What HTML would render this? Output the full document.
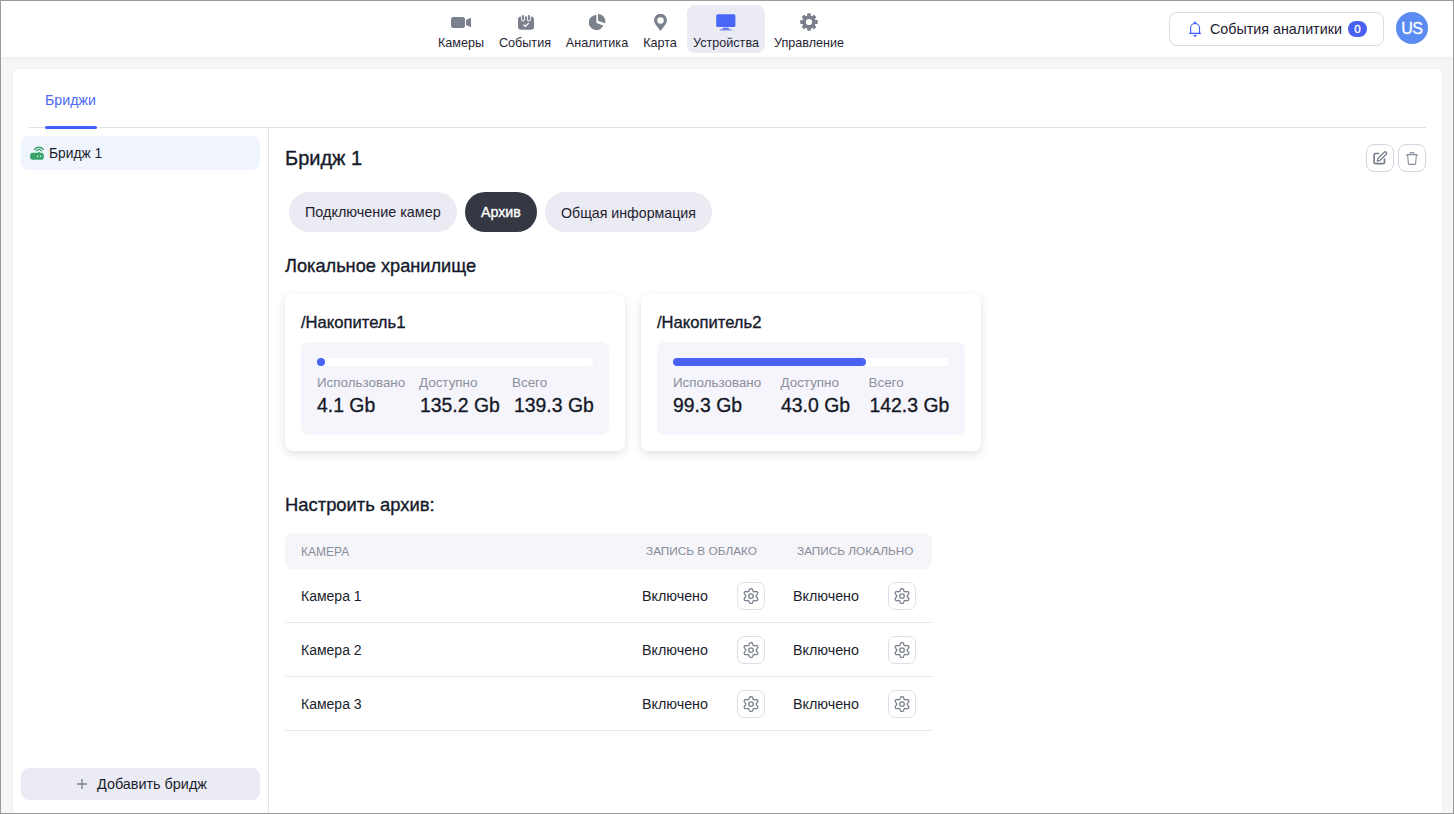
<!DOCTYPE html>
<html><head><meta charset="utf-8">
<style>
*{box-sizing:border-box;margin:0;padding:0}
html,body{width:1454px;height:814px;overflow:hidden}
body{font-family:"Liberation Sans",sans-serif;background:#f6f6f8;position:relative;color:#1a1e2c}
.frame{position:absolute;left:0;top:0;width:1454px;height:814px;border:1px solid #9b9b9b;pointer-events:none;z-index:50}
.t{position:absolute;line-height:1;white-space:nowrap}
.b{position:absolute}
.m{-webkit-text-stroke:0.35px currentColor}
header{position:absolute;left:0;top:0;width:1454px;height:57px;background:#fff;box-shadow:0 1px 6px rgba(0,0,0,0.035)}
.nav{position:absolute;top:5px;height:48px;border-radius:8px}
.nav.active{background:#ebebf4}
.nav svg{position:absolute}
.nl{position:absolute;text-align:center;top:36.8px;font-size:12.6px;line-height:1;color:#1f2433;white-space:nowrap}
.evbtn{position:absolute;left:1169px;top:12px;width:215px;height:34px;border:1px solid #d6dbe6;border-radius:8px;background:#fff}
.badge{position:absolute;left:1348px;top:21px;width:19px;height:16px;border-radius:8px;background:#4a60f0;color:#fff;font-size:11.5px;text-align:center;line-height:16.5px;-webkit-text-stroke:0.35px #fff}
.avatar{position:absolute;left:1396px;top:12px;width:32px;height:32px;border-radius:50%;background:#5a8cf4;color:#fff;font-size:16px;text-align:center;line-height:33px;-webkit-text-stroke:0.3px #fff;letter-spacing:-0.6px;text-indent:-0.6px}
.card{position:absolute;left:13px;top:69px;width:1429px;height:744px;background:#fff;border-radius:5px;box-shadow:0 0 5px rgba(0,0,0,0.045)}
.pill{position:absolute;top:192px;height:40px;border-radius:20px;background:#ebebf3}
.scard{position:absolute;top:294px;width:340px;height:157px;background:#fff;border-radius:8px;box-shadow:0 3px 10px rgba(0,0,0,0.12)}
.sbox{position:absolute;left:16px;top:48px;width:308px;height:93px;background:#f5f5fb;border-radius:8px}
.track{position:absolute;left:16px;top:16px;width:276px;height:8px;border-radius:4px;background:#fff}
.fill{position:absolute;left:0;top:0;height:8px;border-radius:4px;background:#4762f5}
.lbl{position:absolute;line-height:1;white-space:nowrap;font-size:13.4px;color:#8b909d;top:33.7px}
.val{position:absolute;line-height:1;white-space:nowrap;font-size:19.4px;color:#141826;top:53.6px;-webkit-text-stroke:0.3px currentColor}
.gear{position:absolute;width:28px;height:28px;border:1px solid #dce0e9;border-radius:7px;background:#fff}
.gear svg{position:absolute;left:5px;top:5px}
.row{position:absolute;left:285px;width:647px;height:1px;background:#e6e8ef}
.ibtn{position:absolute;top:144px;width:28px;height:28px;border:1px solid #d3d9e4;border-radius:8px;background:#fff}
</style></head>
<body>
<div class="frame"></div>
<svg width="0" height="0" style="position:absolute"><defs><symbol id="g6" viewBox="0 0 16 16"><path d="M8.00 0.55 L8.40 0.56 L8.78 0.67 L9.12 1.01 L9.42 1.44 L9.66 1.92 L9.85 2.40 L10.01 2.85 L10.17 3.23 L10.38 3.42 L10.62 3.55 L10.86 3.70 L11.13 3.79 L11.54 3.73 L12.01 3.65 L12.53 3.57 L13.06 3.54 L13.58 3.58 L14.04 3.71 L14.33 3.99 L14.54 4.32 L14.73 4.67 L14.82 5.06 L14.70 5.53 L14.48 6.00 L14.18 6.44 L13.86 6.85 L13.55 7.22 L13.30 7.54 L13.24 7.83 L13.25 8.10 L13.24 8.37 L13.30 8.66 L13.55 8.98 L13.86 9.35 L14.18 9.76 L14.48 10.20 L14.70 10.67 L14.82 11.14 L14.73 11.53 L14.54 11.87 L14.33 12.21 L14.04 12.49 L13.58 12.62 L13.06 12.66 L12.53 12.63 L12.01 12.55 L11.54 12.47 L11.13 12.41 L10.86 12.50 L10.62 12.65 L10.38 12.78 L10.17 12.97 L10.01 13.35 L9.85 13.80 L9.66 14.28 L9.42 14.76 L9.12 15.19 L8.78 15.53 L8.40 15.64 L8.00 15.65 L7.60 15.64 L7.22 15.53 L6.88 15.19 L6.58 14.76 L6.34 14.28 L6.15 13.80 L5.99 13.35 L5.83 12.97 L5.62 12.78 L5.38 12.65 L5.14 12.50 L4.87 12.41 L4.46 12.47 L3.99 12.55 L3.47 12.63 L2.94 12.66 L2.42 12.62 L1.96 12.49 L1.67 12.21 L1.46 11.88 L1.27 11.53 L1.18 11.14 L1.30 10.67 L1.52 10.20 L1.82 9.76 L2.14 9.35 L2.45 8.98 L2.70 8.66 L2.76 8.37 L2.75 8.10 L2.76 7.83 L2.70 7.54 L2.45 7.22 L2.14 6.85 L1.82 6.44 L1.52 6.00 L1.30 5.53 L1.18 5.06 L1.27 4.67 L1.46 4.32 L1.67 3.99 L1.96 3.71 L2.42 3.58 L2.94 3.54 L3.47 3.57 L3.99 3.65 L4.46 3.73 L4.87 3.79 L5.14 3.70 L5.38 3.55 L5.62 3.42 L5.83 3.23 L5.99 2.85 L6.15 2.40 L6.34 1.92 L6.58 1.44 L6.88 1.01 L7.22 0.67 L7.60 0.56Z" fill="none" stroke="#7b818d" stroke-width="1.35" stroke-linejoin="round"/><circle cx="8" cy="8.1" r="2.3" fill="none" stroke="#7b818d" stroke-width="1.35"/></symbol></defs></svg>
<header>
  <div class="nav active" style="left:687px;width:78px"></div>
  <svg class="b" style="left:451px;top:17px" width="20" height="11" viewBox="0 0 20 11"><rect x="0" y="0" width="14" height="11" rx="2.5" fill="#7a808c"/><path d="M15 3 L20 0.8 V10.2 L15 8Z" fill="#7a808c"/></svg>
  <svg class="b" style="left:518px;top:15px" width="16" height="15" viewBox="0 0 16 15"><rect x="0" y="1.4" width="16" height="13.3" rx="3" fill="#7a808c"/><rect x="3.2" y="-1" width="3.8" height="7.4" rx="1.9" fill="#fff"/><rect x="9" y="-1" width="3.8" height="7.4" rx="1.9" fill="#fff"/><rect x="4.1" y="0" width="2" height="5.4" rx="1" fill="#7a808c"/><rect x="9.9" y="0" width="2" height="5.4" rx="1" fill="#7a808c"/><path d="M5.5 9.6 L7.3 11.3 L10.7 8.1" stroke="#fff" stroke-width="1.25" fill="none"/></svg>
  <svg class="b" style="left:589px;top:14px" width="17" height="16" viewBox="0 0 17 16"><path d="M7.4 0.9 A7.6 7.6 0 1 0 14.3 11.6 L7.4 8.9 Z" fill="#7a808c"/><path d="M9 0 V6.8 L16 9.2 A7.2 7.2 0 0 0 9 0 Z" fill="#7a808c"/></svg>
  <svg class="b" style="left:654px;top:14px" width="13" height="17" viewBox="0 0 12.4 16.3"><path fill-rule="evenodd" fill="#7a808c" d="M6.2 16.3 L1.3 9.8 A6.2 6.2 0 1 1 11.1 9.8 Z M6.2 3.1 A3.1 3.1 0 1 0 6.2 9.3 A3.1 3.1 0 1 0 6.2 3.1Z"/></svg>
  <svg class="b" style="left:716px;top:14px" width="20" height="17" viewBox="0 0 20 17"><rect x="0.2" y="0.2" width="19.2" height="12.8" rx="1.6" fill="#4a66f7"/><rect x="6.8" y="13.8" width="6" height="1.6" fill="#4a66f7"/><rect x="3.8" y="15.2" width="12" height="1.4" rx="0.5" fill="#4a66f7" opacity="0.75"/></svg>
  <svg class="b" style="left:800px;top:12.5px" width="18" height="18" viewBox="0 0 18 18"><g fill="#7a808c"><rect x="7.1" y="0.2" width="3.8" height="4" rx="1" transform="rotate(0 9 9)"/><rect x="7.1" y="0.2" width="3.8" height="4" rx="1" transform="rotate(45 9 9)"/><rect x="7.1" y="0.2" width="3.8" height="4" rx="1" transform="rotate(90 9 9)"/><rect x="7.1" y="0.2" width="3.8" height="4" rx="1" transform="rotate(135 9 9)"/><rect x="7.1" y="0.2" width="3.8" height="4" rx="1" transform="rotate(180 9 9)"/><rect x="7.1" y="0.2" width="3.8" height="4" rx="1" transform="rotate(225 9 9)"/><rect x="7.1" y="0.2" width="3.8" height="4" rx="1" transform="rotate(270 9 9)"/><rect x="7.1" y="0.2" width="3.8" height="4" rx="1" transform="rotate(315 9 9)"/><circle cx="9" cy="9" r="6.6"/></g><circle cx="9" cy="9" r="3.1" fill="#fff"/></svg>
  <span class="nl" style="left:436px;width:50px">Камеры</span>
  <span class="nl" style="left:497px;width:56px">События</span>
  <span class="nl" style="left:563px;width:68px">Аналитика</span>
  <span class="nl" style="left:640px;width:40px">Карта</span>
  <span class="nl" style="left:687px;width:78px">Устройства</span>
  <span class="nl" style="left:772px;width:74px">Управление</span>
  <div class="evbtn"></div>
  <svg class="b" style="left:1189px;top:21px" width="12" height="16" viewBox="0 0 12 16"><path d="M1.6 12.4 V6.95 A4.45 4.45 0 0 1 10.5 6.95 V12.4 M0.6 12.4 H11.5" stroke="#3f5ef7" stroke-width="1.15" fill="none" stroke-linecap="round"/><path d="M4.9 2.7 L6 0.3 L7.1 2.7Z" fill="#3f5ef7" stroke="#3f5ef7" stroke-width="0.6" stroke-linejoin="round"/><path d="M4.5 14.2 H7.5 L6 15.9Z" fill="#3f5ef7" stroke="#3f5ef7" stroke-width="0.6" stroke-linejoin="round"/></svg>
  <span class="t" style="left:1210px;top:21.8px;font-size:14.3px;color:#1c2030">События аналитики</span>
  <div class="badge">0</div>
  <div class="avatar">US</div>
</header>

<div class="card"></div>
<!-- tabs -->
<span class="t" style="left:45px;top:92.5px;font-size:14.2px;color:#4c69f6">Бриджи</span>
<div class="b" style="left:29px;top:127px;width:1397px;height:1px;background:#dde2ec"></div>
<div class="b" style="left:45px;top:126px;width:52px;height:3px;border-radius:2px;background:#4361f5"></div>
<!-- sidebar -->
<div class="b" style="left:268px;top:128px;width:1px;height:686px;background:#e4e6ec"></div>
<div class="b" style="left:21px;top:136px;width:239px;height:34px;border-radius:8px;background:#f0f4fd"></div>
<svg class="b" style="left:30px;top:146px" width="14" height="14" viewBox="0 0 14 14"><path d="M4.4 3.5 Q9 -0.9 13.6 3.5" stroke="#36a269" stroke-width="1.35" fill="none" stroke-linecap="round"/><path d="M6.4 4.9 Q9 2.4 11.5 4.9" stroke="#36a269" stroke-width="1.3" fill="none" stroke-linecap="round"/><rect x="0.2" y="6.8" width="13.6" height="7" rx="2.4" fill="#36a269"/><rect x="8.2" y="6" width="1.6" height="1.5" rx="0.5" fill="#36a269"/><circle cx="7.6" cy="10.3" r="0.75" fill="#fff"/><circle cx="10.5" cy="10.3" r="0.75" fill="#fff"/></svg>
<span class="t" style="left:49px;top:146.5px;font-size:13.8px;color:#1a1e2c">Бридж 1</span>

<div class="b" style="left:21px;top:768px;width:239px;height:32px;border-radius:8px;background:#eaebf4"></div>
<svg class="b" style="left:77px;top:779px" width="10" height="10" viewBox="0 0 10 10"><path d="M5 0 V10 M0 5 H10" stroke="#7c818d" stroke-width="1.3"/></svg>
<span class="t" style="left:97px;top:777.3px;font-size:14.4px;color:#1a1e2c">Добавить бридж</span>

<!-- main -->
<span class="t m" style="left:285px;top:148.4px;font-size:20px;color:#151a2b">Бридж 1</span>
<div class="ibtn" style="left:1366px"><svg class="b" style="left:4px;top:4px" width="18" height="18" viewBox="0 0 18 18"><path d="M8.3 4.5 H4.4 A1.3 1.3 0 0 0 3.1 5.8 V13.4 A1.3 1.3 0 0 0 4.4 14.7 H12.2 A1.3 1.3 0 0 0 13.5 13.4 V9.6" stroke="#79808c" stroke-width="1.7" fill="none"/><path d="M6.20 12.10 L9.08 11.34 L15.31 5.34 A1.45 1.45 0 0 0 13.29 3.26 L7.07 9.25Z" stroke="#79808c" stroke-width="1.3" fill="none" stroke-linejoin="round"/></svg></div>
<div class="ibtn" style="left:1398px"><svg class="b" style="left:7px;top:7px" width="12" height="13" viewBox="0 0 12 13"><path d="M0.3 2.6 H11.7 M4.3 2.4 V1.1 A0.6 0.6 0 0 1 4.9 0.5 H7.1 A0.6 0.6 0 0 1 7.7 1.1 V2.4 M1.6 2.8 L2.4 11.6 A1 1 0 0 0 3.4 12.4 H8.6 A1 1 0 0 0 9.6 11.6 L10.4 2.8" stroke="#8a909b" stroke-width="1.1" fill="none"/></svg></div>

<div class="pill" style="left:289px;width:168px"></div>
<span class="t" style="left:305px;top:205.4px;font-size:14.4px;color:#1d2130">Подключение камер</span>
<div class="pill" style="left:465px;width:72px;background:#343843"></div>
<span class="t m" style="left:481px;top:205.4px;font-size:14.2px;color:#fff;-webkit-text-stroke:0.35px #fff">Архив</span>
<div class="pill" style="left:545px;width:167px"></div>
<span class="t" style="left:561px;top:205.5px;font-size:14.2px;color:#1d2130">Общая информация</span>

<span class="t m" style="left:285px;top:257.2px;font-size:18.2px;color:#151a2b">Локальное хранилище</span>

<div class="scard" style="left:285px">
  <span class="t m" style="left:16px;top:20.8px;font-size:16.6px;color:#151a2b">/Накопитель1</span>
  <div class="sbox">
    <div class="track"><div class="fill" style="width:8px"></div></div>
    <span class="lbl" style="left:16px">Использовано</span>
    <span class="lbl" style="left:118px">Доступно</span>
    <span class="lbl" style="left:211px">Всего</span>
    <span class="val" style="left:16px">4.1 Gb</span>
    <span class="val" style="left:119px">135.2 Gb</span>
    <span class="val" style="left:213px">139.3 Gb</span>
  </div>
</div>
<div class="scard" style="left:641px">
  <span class="t m" style="left:16px;top:20.8px;font-size:16.6px;color:#151a2b">/Накопитель2</span>
  <div class="sbox">
    <div class="track"><div class="fill" style="width:193px"></div></div>
    <span class="lbl" style="left:16px">Использовано</span>
    <span class="lbl" style="left:123.5px">Доступно</span>
    <span class="lbl" style="left:211.5px">Всего</span>
    <span class="val" style="left:16px">99.3 Gb</span>
    <span class="val" style="left:124px">43.0 Gb</span>
    <span class="val" style="left:212.5px">142.3 Gb</span>
  </div>
</div>

<span class="t m" style="left:285px;top:496.3px;font-size:18.4px;color:#151a2b">Настроить архив:</span>
<div class="b" style="left:285px;top:533px;width:647px;height:36px;border-radius:8px;background:#f5f5fa"></div>
<span class="t" style="left:301px;top:546.0px;font-size:12px;color:#878c99">КАМЕРА</span>
<span class="t" style="left:646px;top:546.0px;font-size:11.8px;color:#878c99">ЗАПИСЬ В ОБЛАКО</span>
<span class="t" style="left:797px;top:546.0px;font-size:11.8px;color:#878c99">ЗАПИСЬ ЛОКАЛЬНО</span>

<span class="t" style="left:301px;top:589.3px;font-size:14px;color:#1a1e2c">Камера 1</span>
<span class="t" style="left:642px;top:588.9px;font-size:14.3px;color:#1a1e2c">Включено</span>
<div class="gear" style="left:737px;top:582px"><svg width="16" height="16"><use href="#g6"/></svg></div>
<span class="t" style="left:793px;top:588.9px;font-size:14.3px;color:#1a1e2c">Включено</span>
<div class="gear" style="left:888px;top:582px"><svg width="16" height="16"><use href="#g6"/></svg></div>
<div class="row" style="top:622px"></div>
<span class="t" style="left:301px;top:643.3px;font-size:14px;color:#1a1e2c">Камера 2</span>
<span class="t" style="left:642px;top:642.9px;font-size:14.3px;color:#1a1e2c">Включено</span>
<div class="gear" style="left:737px;top:636px"><svg width="16" height="16"><use href="#g6"/></svg></div>
<span class="t" style="left:793px;top:642.9px;font-size:14.3px;color:#1a1e2c">Включено</span>
<div class="gear" style="left:888px;top:636px"><svg width="16" height="16"><use href="#g6"/></svg></div>
<div class="row" style="top:676px"></div>
<span class="t" style="left:301px;top:697.3px;font-size:14px;color:#1a1e2c">Камера 3</span>
<span class="t" style="left:642px;top:696.9px;font-size:14.3px;color:#1a1e2c">Включено</span>
<div class="gear" style="left:737px;top:690px"><svg width="16" height="16"><use href="#g6"/></svg></div>
<span class="t" style="left:793px;top:696.9px;font-size:14.3px;color:#1a1e2c">Включено</span>
<div class="gear" style="left:888px;top:690px"><svg width="16" height="16"><use href="#g6"/></svg></div>
<div class="row" style="top:730px"></div>
</body></html>
